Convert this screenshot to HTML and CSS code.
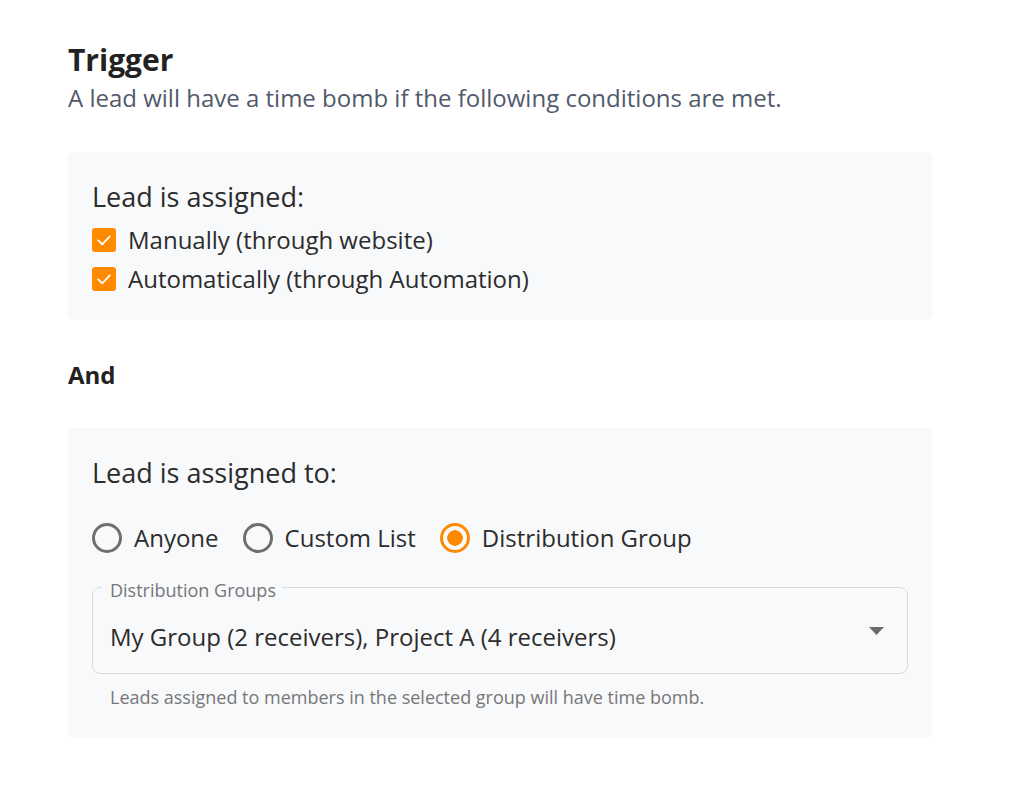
FILE: index.html
```html
<!DOCTYPE html>
<html lang="en">
<head>
<meta charset="utf-8">
<title>Trigger</title>
<link rel="stylesheet" href="styles.css">
</head>
<body>
<main class="page">
  <h1 class="title">Trigger</h1>
  <p class="subtitle">A lead will have a time bomb if the following conditions are met.</p>

  <section class="card card-assigned">
    <div class="card-label">Lead is assigned:</div>
    <label class="check-row">
      <span class="checkbox"><svg viewBox="0 0 24 24" width="24" height="24"><path d="M6.2 12.4 L10.2 16.3 L17.8 8.3" fill="none" stroke="#fff" stroke-width="1.8" stroke-linecap="round" stroke-linejoin="round"/></svg></span>
      <span class="check-text">Manually (through website)</span>
    </label>
    <label class="check-row">
      <span class="checkbox"><svg viewBox="0 0 24 24" width="24" height="24"><path d="M6.2 12.4 L10.2 16.3 L17.8 8.3" fill="none" stroke="#fff" stroke-width="1.8" stroke-linecap="round" stroke-linejoin="round"/></svg></span>
      <span class="check-text">Automatically (through Automation)</span>
    </label>
  </section>

  <div class="and">And</div>

  <section class="card card-to">
    <div class="card-label">Lead is assigned to:</div>
    <div class="radio-row">
      <label class="radio-item"><span class="radio"></span><span class="radio-text">Anyone</span></label>
      <label class="radio-item"><span class="radio"></span><span class="radio-text">Custom List</span></label>
      <label class="radio-item"><span class="radio radio-on"></span><span class="radio-text">Distribution Group</span></label>
    </div>
    <fieldset class="select">
      <legend class="select-label">Distribution Groups</legend>
      <div class="select-body">
        <span class="select-value">My Group (2 receivers), Project A (4 receivers)</span>
        <svg class="select-arrow" viewBox="0 0 15 8" width="15" height="8"><path d="M0 0 L15 0 L7.5 8 Z" fill="#6b6b6b"/></svg>
      </div>
    </fieldset>
    <p class="helper">Leads assigned to members in the selected group will have time bomb.</p>
  </section>
</main>
</body>
</html>
```
FILE: styles.css
```css
* { box-sizing: border-box; }
html, body { margin: 0; padding: 0; background: #fff; }
body {
  font-family: "Open Sans", "Noto Sans", sans-serif;
  color: #2c2c2c;
}
.page {
  width: 864px;
  margin-left: 68px;
  padding-top: 40px;
}
.title {
  margin: 0;
  font-size: 30px;
  line-height: 40px;
  font-weight: 700;
  color: #222;
}
.subtitle {
  margin: 2px 0 0;
  font-size: 24px;
  line-height: 32px;
  color: #515a6b;
}
.card {
  background: #f8f9fb;
  border-radius: 6px;
  padding: 27px 24px 22px;
}
.card-assigned { margin-top: 38px; }
.card-label {
  font-size: 27px;
  line-height: 36px;
  color: #2c2c2c;
}
.check-row {
  display: flex;
  align-items: center;
  height: 39px;
  gap: 12px;
}
.card-label + .check-row { margin-top: 5px; }
.checkbox {
  width: 24px;
  height: 24px;
  border-radius: 3px;
  background: #ff8a00;
  display: flex;
  align-items: center;
  justify-content: center;
  flex: none;
}
.checkbox svg { display: block; }
.check-text {
  font-size: 24px;
  line-height: 32px;
}
.and {
  margin-top: 39px;
  font-size: 24px;
  line-height: 32px;
  font-weight: 700;
  color: #222;
}
.card-to {
  margin-top: 37px;
  padding-bottom: 28px;
}
.radio-row {
  display: flex;
  align-items: center;
  height: 40px;
  margin-top: 27px;
  gap: 24px;
}
.radio-item {
  display: flex;
  align-items: center;
  gap: 12px;
}
.radio {
  width: 30px;
  height: 30px;
  border-radius: 50%;
  border: 3px solid #6f6f6f;
  flex: none;
}
.radio-on {
  border-color: #ff8a00;
  background: radial-gradient(circle, #ff8a00 0 7.5px, transparent 8px);
}
.radio-text {
  font-size: 24px;
  line-height: 32px;
}
.select {
  margin: 16px 0 0;
  padding: 0;
  border: 1px solid #d9dadc;
  border-radius: 8px;
  min-width: 0;
}
.select-label {
  margin-left: 9px;
  padding: 6px 6px 0 8px;
  font-size: 18px;
  line-height: 20px;
  color: #767676;
}
.select-body {
  display: flex;
  align-items: flex-start;
  justify-content: space-between;
  padding: 0 23px 0 17px;
  height: 73px;
}
.select-value {
  font-size: 24px;
  line-height: 32px;
  color: #2c2c2c;
  margin-top: 21px;
}
.select-arrow { display: block; flex: none; margin-top: 27px; }
.helper {
  margin: 10px 0 0 18px;
  font-size: 18px;
  line-height: 26px;
  color: #777;
}
```
